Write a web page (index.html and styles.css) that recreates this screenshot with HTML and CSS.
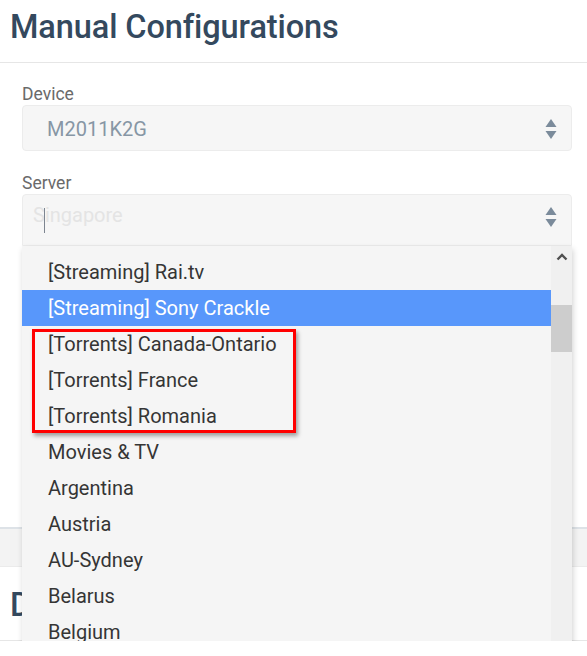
FILE: index.html
```html
<!DOCTYPE html>
<html lang="en">
<head>
<meta charset="utf-8">
<title>Manual Configurations</title>
<link rel="stylesheet" href="styles.css">
</head>
<body>
<header class="page-head">
  <h1 class="page-title">Manual Configurations</h1>
</header>

<section class="form-section">
  <div class="field">
    <label class="field-label">Device</label>
    <div class="select">
      <span class="select-value">M2011K2G</span>
      <svg class="select-arrow" width="12" height="22" viewBox="0 0 12 22"><polygon points="0.5,9 6,1 11.5,9" fill="#7b8b9b"/><polygon points="0.5,13 11.5,13 6,21" fill="#7b8b9b"/></svg>
    </div>
  </div>

  <div class="field">
    <label class="field-label">Server</label>
    <div class="select select-open">
      <span class="select-placeholder">Singapore</span>
      <span class="caret"></span>
      <svg class="select-arrow" width="12" height="22" viewBox="0 0 12 22"><polygon points="0.5,9 6,1 11.5,9" fill="#7b8b9b"/><polygon points="0.5,13 11.5,13 6,21" fill="#7b8b9b"/></svg>
      <div class="dropdown">
        <ul class="options">
          <li class="option">[Streaming] Rai.tv</li>
          <li class="option option-active">[Streaming] Sony Crackle</li>
          <li class="option">[Torrents] Canada-Ontario</li>
          <li class="option">[Torrents] France</li>
          <li class="option">[Torrents] Romania</li>
          <li class="option">Movies &amp; TV</li>
          <li class="option">Argentina</li>
          <li class="option">Austria</li>
          <li class="option">AU-Sydney</li>
          <li class="option">Belarus</li>
          <li class="option">Belgium</li>
        </ul>
        <div class="scrollbar">
          <div class="scroll-btn">
            <svg width="12" height="8" viewBox="0 0 12 8"><polyline points="1.5,6.5 6,2 10.5,6.5" fill="none" stroke="#4f4f4f" stroke-width="2.4"/></svg>
          </div>
          <div class="scroll-thumb"></div>
        </div>
        <div class="highlight-box"></div>
      </div>
    </div>
  </div>
</section>

<div class="section-band"></div>

<header class="page-head page-head-second">
  <h1 class="page-title">Download</h1>
</header>
</body>
</html>
```

FILE: styles.css
```css
* { box-sizing: border-box; }

html, body {
  margin: 0;
  padding: 0;
  background: #ffffff;
  font-family: Roboto, "Liberation Sans", Arial, sans-serif;
  overflow: hidden;
}

.page-head {
  padding: 0 10px 8px;
  border-bottom: 1px solid #e6e6e6;
}

.page-head-second {
  padding-top: 11px;
}

.page-title {
  margin: 0;
  font-size: 32.5px;
  line-height: 54px;
  font-weight: 500;
  color: #34495e;
  letter-spacing: -0.1px;
}

.form-section {
  height: 464px;
  padding: 21px 15px 0 22px;
  display: flex;
  flex-direction: column;
  gap: 22px;
}

.field {
  display: flex;
  flex-direction: column;
  gap: 1px;
}

.field-label {
  font-size: 17.5px;
  line-height: 20px;
  color: #6a6a6a;
}

.select {
  position: relative;
  height: 46px;
  background: #f6f6f6;
  border: 1px solid #ececec;
  border-radius: 4px;
  display: flex;
  align-items: center;
  padding: 2px 14px 0 24px;
}

.select-value {
  flex: 1;
  font-size: 20px;
  color: #8796a5;
}

.select-arrow {
  display: block;
}

.select-open {
  height: 52px;
  align-items: flex-start;
  padding: 8px 14px 0 10px;
  border-bottom-left-radius: 0;
  border-bottom-right-radius: 0;
}

.select-open .select-arrow {
  margin-top: 3px;
}

.select-placeholder {
  flex: 1;
  font-size: 20px;
  line-height: 24px;
  color: #e4e4e4;
}

.caret {
  position: absolute;
  left: 21px;
  top: 13px;
  width: 1px;
  height: 25px;
  background: #7d8590;
}

.dropdown {
  position: absolute;
  left: -1px;
  right: -1px;
  top: 51px;
  height: 420px;
  background: #f5f5f5;
  display: flex;
  box-shadow: 1px 3px 6px rgba(0, 0, 0, 0.18);
}

.options {
  flex: 1;
  list-style: none;
  margin: 0;
  padding: 8px 0 0;
  overflow: hidden;
}

.option {
  height: 36px;
  line-height: 36px;
  padding-left: 26px;
  font-size: 20px;
  color: #353535;
  white-space: nowrap;
}

.option-active {
  background: #5897fb;
  color: #ffffff;
}

.scrollbar {
  width: 21px;
  background: #f0f0f0;
  display: flex;
  flex-direction: column;
  align-items: stretch;
}

.scroll-btn {
  height: 21px;
  display: flex;
  align-items: center;
  justify-content: center;
  padding-left: 1px;
}

.scroll-thumb {
  margin-top: 38px;
  height: 47px;
  background: #cdcdcd;
}

.highlight-box {
  position: absolute;
  left: 10px;
  top: 83px;
  width: 264px;
  height: 104px;
  border: 3px solid #ff0000;
  box-shadow: 2px 3px 4px rgba(0, 0, 0, 0.35);
}

.section-band {
  height: 40px;
  background: #f3f3f3;
  border-top: 2px solid #dde2e7;
  border-bottom: 1px solid #ebebeb;
}
```
